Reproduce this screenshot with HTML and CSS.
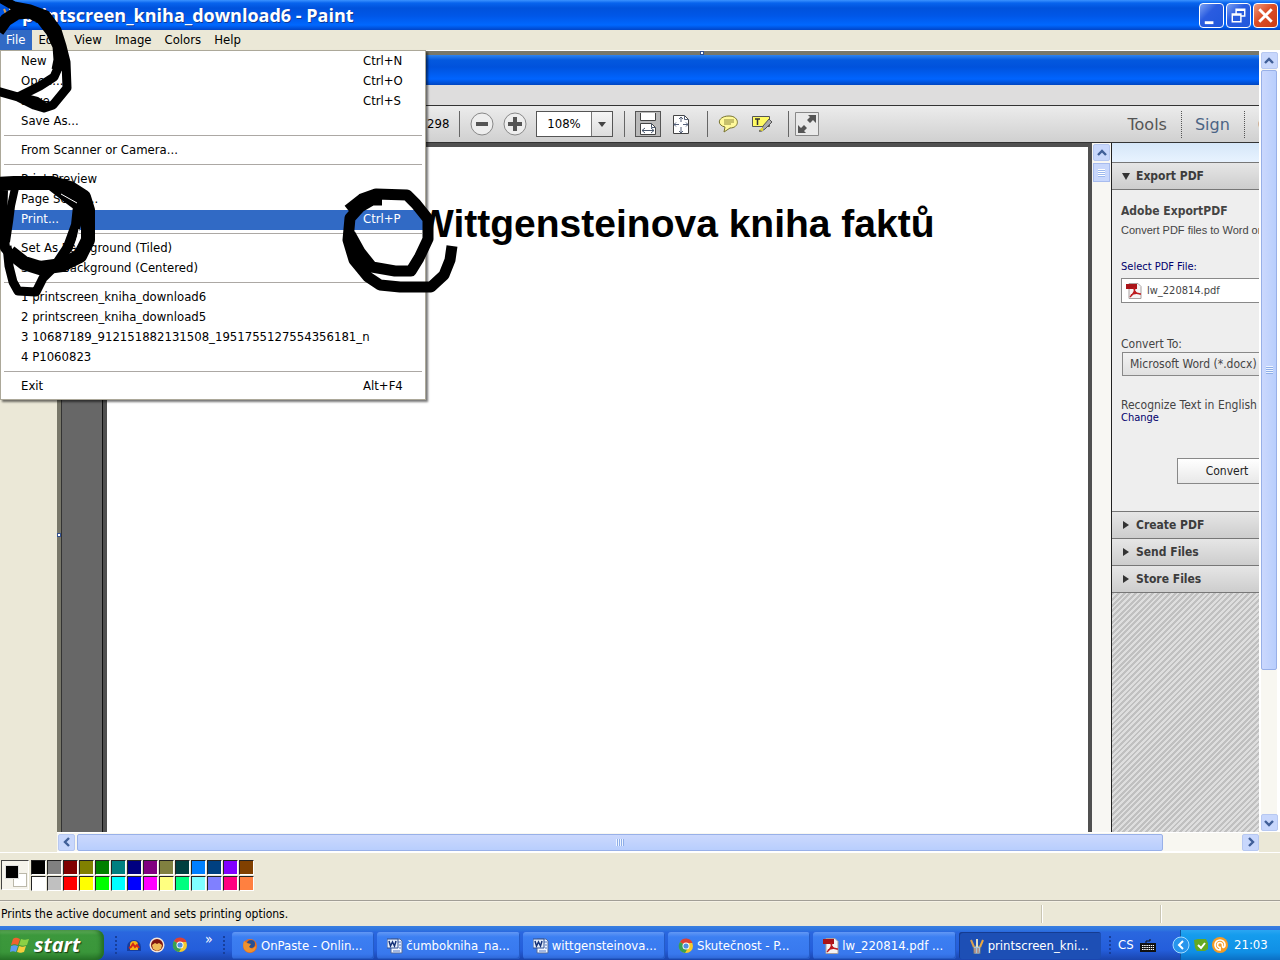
FILE: index.html
```html
<!DOCTYPE html>
<html lang="en">
<head>
<meta charset="utf-8">
<title>printscreen_kniha_download6 - Paint</title>
<link rel="stylesheet" href="styles.css">
</head>
<body>
<svg class="defs" aria-hidden="true">
  <defs>
    <symbol id="up" viewBox="0 0 10 10"><path d="M1 7l4-4 4 4" fill="none" stroke="#405f98" stroke-width="2.4"/></symbol>
    <symbol id="word" viewBox="0 0 16 16"><path d="M4 1h9l2 2v12H4z" fill="#eef4ff" stroke="#526a9d"/><path d="M11 4h3M12 7h2M12 10h2M6 13h7" stroke="#5479c4"/><path d="M0 1h11v9H0z" fill="#e5eefc" stroke="#315192"/><path d="M2 3l1.500 5L5.500 4l2 4L9 3" fill="none" stroke="#153278" stroke-width="1.500"/></symbol>
    <symbol id="chrome" viewBox="0 0 16 16"><circle cx="8" cy="8" r="7" fill="#f4ca2d"/><path d="M8 8L2 4a7 7 0 0 1 12.500 1H8z" fill="#dc4134"/><path d="M8 8l-6-4a7 7 0 0 0 5 11l3-5z" fill="#38a052"/><circle cx="8" cy="8" r="3.500" fill="#fff"/><circle cx="8" cy="8" r="2.600" fill="#4f8fdf"/></symbol>
    <symbol id="pdf" viewBox="0 0 16 16"><path d="M3 .5h9l3 3v12H3z" fill="#f5f3f3" stroke="#a9a0a0"/><path d="M0 1h11v5H0z" fill="#aa1419"/><path d="M8 4c2 4-1 7-4 10M8 5c0 4 3 6 7 6M5 12c3-2 6-2 9-1" fill="none" stroke="#bd191e" stroke-width="1.500"/></symbol>
    <symbol id="paint" viewBox="0 0 16 16"><path d="M4 8h8l-1 8H5z" fill="#a5c5d9" stroke="#536a87"/><path d="M5 9L2 2" stroke="#d7a052" stroke-width="2"/><path d="M8 9V1" stroke="#e4e0c5" stroke-width="2"/><path d="M11 9l3-7" stroke="#e8a842" stroke-width="2"/><path d="M6 10v5M9 10v5" stroke="#bd6345"/></symbol>
  </defs>
</svg>

<header class="titlebar">
  <svg class="app-icon"><use href="#paint"/></svg>
  <h1>printscreen_kniha_download6 - Paint</h1>
  <div class="window-buttons">
    <button aria-label="Minimize"><svg viewBox="0 0 24 24"><path d="M5 18h9v3H5z" fill="#fff"/></svg></button>
    <button aria-label="Restore"><svg viewBox="0 0 24 24"><path d="M9.500 10V5.500h9v7H15M9 6.500h10M5.500 10.500h9v8h-9zM5 11.500h10" fill="none" stroke="#fff" stroke-width="1.500"/></svg></button>
    <button class="close" aria-label="Close"><svg viewBox="0 0 24 24"><path d="M5.500 5.500l13 13M18.500 5.500l-13 13" stroke="#fff" stroke-width="3"/></svg></button>
  </div>
</header>

<nav class="menubar">
  <button class="open">File</button><button>Edit</button><button>View</button><button>Image</button><button>Colors</button><button>Help</button>
  <div class="menu">
    <button>New<kbd>Ctrl+N</kbd></button>
    <button>Open...<kbd>Ctrl+O</kbd></button>
    <button>Save<kbd>Ctrl+S</kbd></button>
    <button>Save As...</button>
    <hr>
    <button>From Scanner or Camera...</button>
    <hr>
    <button>Print Preview</button>
    <button>Page Setup...</button>
    <button class="selected">Print...<kbd>Ctrl+P</kbd></button>
    <hr>
    <button>Set As Background (Tiled)</button>
    <button>Set As Background (Centered)</button>
    <hr>
    <button>1 printscreen_kniha_download6</button>
    <button>2 printscreen_kniha_download5</button>
    <button>3 10687189_912151882131508_1951755127554356181_n</button>
    <button>4 P1060823</button>
    <hr>
    <button>Exit<kbd>Alt+F4</kbd></button>
  </div>
</nav>

<main class="workspace">
  <aside class="toolbox"></aside>
  <div class="view">
    <div class="canvas">
      <i class="handle top"></i><i class="handle left"></i>
      <div class="pdf-title"></div>
      <div class="pdf-menu"></div>
      <div class="pdf-toolbar">
        <span>298</span>
        <i class="rule"></i>
        <button class="round" aria-label="Zoom out"><svg viewBox="0 0 24 24"><circle cx="12" cy="12" r="11" fill="#eee" stroke="#888"/><path d="M6 10h12v4H6z" fill="#555"/></svg></button>
        <button class="round" aria-label="Zoom in"><svg viewBox="0 0 24 24"><circle cx="12" cy="12" r="11" fill="#eee" stroke="#888"/><path d="M5 10h5V5h4v5h5v4h-5v5h-4v-5H5z" fill="#555"/></svg></button>
        <div class="zoom"><input aria-label="Zoom" value="108%"><button aria-label="Zoom levels"><svg viewBox="0 0 8 5"><path d="M0 0h8L4 5z" fill="#444"/></svg></button></div>
        <i class="rule"></i>
        <button class="fit on" aria-label="Fit width"><svg viewBox="0 0 24 24"><path d="M4.500 1v7.500h15V1M4.500 22.500v-11h11l4 4v7z" fill="#fff" stroke="#444"/><path d="M15.500 11.500v4h4M6 18.500h12M9 16l-3 2.500L9 21M15 16l3 2.500-3 2.500" fill="none" stroke="#48566b"/></svg></button>
        <button class="fit" aria-label="Fit page"><svg viewBox="0 0 24 24"><path d="M4.500 3.500h11l4 4v14h-15z" fill="#fff" stroke="#444"/><path d="M15.500 3.500v4h4M12 5v5M12 15v6M5 12.500h5M14 12.500h5M10 7l2-2 2 2M10 19l2 2 2-2M7 10.500l-2 2 2 2M17 10.500l2 2-2 2" fill="none" stroke="#55617a"/></svg></button>
        <i class="rule"></i>
        <button class="note" aria-label="Comment"><svg viewBox="0 0 22 20"><path d="M11 2c11 0 11 12 1 12l-6 4 1-5C-2 11 0 2 11 2z" fill="#fff99b" stroke="#77732e"/><path d="M6 6h10M6 8h10M6 10h7" stroke="#8d873c"/></svg></button>
        <button class="note" aria-label="Highlight"><svg viewBox="0 0 22 20"><path d="M1.500 2.500h17v10h-17z" fill="#fffa63" stroke="#555"/><path d="M4 5h5M6.500 5v6" stroke="#333" stroke-width="1.500"/><path d="M8 17c3-1 3-2 4-5l6-7 3 3-7 7c-2 1-3 3-6 2z" fill="#aaa" stroke="#555"/><path d="M8 16l4-3v4z" fill="#e8dd2a"/></svg></button>
        <i class="rule"></i>
        <button class="expand" aria-label="Full screen"><svg viewBox="0 0 24 24"><path d="M.5.500h23v23H.5z" fill="#e9e9e9" stroke="#888"/><path d="M21 3v8l-3-3-3 3-3-3 3-3-2-2zM3 21v-8l3 3 3-3 3 3-3 3 2 2z" fill="#555"/></svg></button>
        <div class="tabs"><button>Tools</button><button class="sign">Sign</button><button>C</button></div>
      </div>
      <div class="pdf-body">
        <div class="thumbs"></div>
        <article class="page"><h2>Wittgensteinova kniha faktů</h2></article>
        <div class="inner-scroll"><button aria-label="Scroll up"><svg><use href="#up"/></svg></button><b></b></div>
        <section class="panel">
          <div class="panel-top"></div>
          <button class="head"><svg viewBox="0 0 8 8"><path d="M0 1h8L4 8z"/></svg>Export PDF</button>
          <div class="export">
            <h3>Adobe ExportPDF</h3>
            <p class="small">Convert PDF files to Word or</p>
            <a href="#" class="select-label">Select PDF File:</a>
            <div class="file"><svg><use href="#pdf"/></svg>lw_220814.pdf</div>
            <label for="format">Convert To:</label>
            <select id="format"><option>Microsoft Word (*.docx)</option></select>
            <p class="language">Recognize Text in English</p>
            <a href="#" class="change">Change</a>
            <button class="convert">Convert</button>
          </div>
          <button class="head"><svg viewBox="0 0 8 8"><path d="M1 0v8l6-4z"/></svg>Create PDF</button>
          <button class="head"><svg viewBox="0 0 8 8"><path d="M1 0v8l6-4z"/></svg>Send Files</button>
          <button class="head"><svg viewBox="0 0 8 8"><path d="M1 0v8l6-4z"/></svg>Store Files</button>
          <div class="hatch"></div>
        </section>
      </div>
    </div>
    <div class="vscroll"><button aria-label="Scroll up"><svg><use href="#up"/></svg></button><b></b><button class="down" aria-label="Scroll down"><svg><use href="#up"/></svg></button></div>
    <div class="hscroll"><button class="to-left" aria-label="Scroll left"><svg><use href="#up"/></svg></button><b></b><button class="to-right" aria-label="Scroll right"><svg><use href="#up"/></svg></button></div>
  </div>
</main>

<section class="palette">
  <div class="current"><i class="back"></i><i class="front"></i></div>
  <div class="swatches">
    <button class="c1"></button><button class="c2"></button><button class="c3"></button><button class="c4"></button><button class="c5"></button><button class="c6"></button><button class="c7"></button><button class="c8"></button><button class="c9"></button><button class="c10"></button><button class="c11"></button><button class="c12"></button><button class="c13"></button><button class="c14"></button>
    <button class="c15"></button><button class="c16"></button><button class="c17"></button><button class="c18"></button><button class="c19"></button><button class="c20"></button><button class="c21"></button><button class="c22"></button><button class="c23"></button><button class="c24"></button><button class="c25"></button><button class="c26"></button><button class="c27"></button><button class="c28"></button>
  </div>
</section>
<div class="status"><span>Prints the active document and sets printing options.</span><i></i><i></i></div>

<footer class="taskbar">
  <button class="start"><svg viewBox="0 0 20 20"><path d="M3 4c3-2 4-1 7 0L8 10c-3-1-4-1-7 0z" fill="#ee622f"/><path d="M11 4c3 1 4 1 8 0l-2 6c-3 1-5 1-8 0z" fill="#8bd145"/><path d="M1 11c3-1 4-1 7 0l-2 6c-2-1-4-1-6 0z" fill="#5b9cf3"/><path d="M9 11c3 1 4 1 7 0l-2 6c-3 1-4 1-7 0z" fill="#f7ce3d"/></svg>start</button>
  <i class="grip"></i>
  <div class="quick">
    <button aria-label="Audacity"><svg viewBox="0 0 16 16"><path d="M1 10a7 7 0 0 1 14 0v4H1z" fill="#163d9e"/><path d="M4 8a4 4 0 0 1 8 0v5H4z" fill="#f5b318"/><path d="M3 11l2-1 2-3 2 3 2-2 2 3" stroke="#d32718" fill="none" stroke-width="2"/></svg></button>
    <button aria-label="Irfan"><svg viewBox="0 0 16 16"><circle cx="8" cy="8" r="7.500" fill="#f5e6d9"/><circle cx="8" cy="8" r="6" fill="#80160f"/><path d="M3 8l3-2 2 1 2-1 3 2-1 4-4 2-4-2z" fill="#efbc5b"/></svg></button>
    <button aria-label="Chrome"><svg><use href="#chrome"/></svg></button>
    <span>»</span>
  </div>
  <i class="grip"></i>
  <div class="tasks">
    <button><svg viewBox="0 0 16 16"><circle cx="8" cy="8" r="7" fill="#e66b1e"/><circle cx="9" cy="6" r="4" fill="#284e91"/><path d="M2 3l3 2 4 1-2 3 3 2 4-3c0 5-4 7-8 6-4-1-6-6-4-11z" fill="#ef922e"/></svg>OnPaste - Onlin...</button>
    <button><svg><use href="#word"/></svg>čumbokniha_na...</button>
    <button><svg><use href="#word"/></svg>wittgensteinova...</button>
    <button><svg><use href="#chrome"/></svg>Skutečnost - P...</button>
    <button><svg><use href="#pdf"/></svg>lw_220814.pdf ...</button>
    <button class="active"><svg><use href="#paint"/></svg>printscreen_kni...</button>
  </div>
  <div class="lang"><i class="grip"></i><span>CS</span><svg viewBox="0 0 16 16"><path d="M0 6h16v9H0z" fill="#111"/><path d="M2 8.500h12M2 10.500h12M2 12.500h12" stroke="#fff" stroke-dasharray="1.500 .7"/><path d="M6 6V4h4V2" stroke="#111" fill="none"/></svg></div>
  <div class="tray">
    <button class="hide" aria-label="Hide icons"><svg viewBox="0 0 18 18"><circle cx="9" cy="9" r="8" fill="#2695ed" stroke="#a2daff"/><path d="M11 5L7 9l4 4" fill="none" stroke="#fff" stroke-width="2"/></svg></button>
    <svg viewBox="0 0 16 16"><path d="M1 3l4-1h8l2 4v6l-3 2H4l-2-3z" fill="#64a922"/><path d="M5 8l3 3 4-5" stroke="#fff" stroke-width="2" fill="none"/></svg>
    <svg viewBox="0 0 16 16"><circle cx="8" cy="8" r="8" fill="#f59b23"/><path d="M10.500 8a2.500 2.500 0 1 0-2.500 2.500V13a5 5 0 1 1 5-5c0 3-2.500 3-2.500 1z" fill="none" stroke="#fff" stroke-width="1.700"/></svg>
    <time>21:03</time>
  </div>
</footer>

<svg class="scribble" viewBox="0 0 470 310" aria-hidden="true">
  <g fill="none" stroke="#000" stroke-linejoin="round">
    <path stroke-width="13" d="M-2 31L6 20 17 13 30 12 42 18 52 31 59 46 60 60 58 70"/>
    <path stroke-width="9" d="M-2-3L14 6 30 9 46 15 57 30 62 46 66 62 67 88 53 105 44 108 34 105 18 97-3 91"/>
    <path stroke-width="9" d="M58 68L54 77 40 86 18 97M20 97L36 101 46 108"/>
    <path stroke-width="14" d="M-2 184L14 183 52 183 70 188 84 197 88 210 88 240 80 256 62 265 40 268 24 263 10 252"/>
    <path stroke-width="10" d="M3 190L2 220 5 248 14 258M52 186L66 197 78 206 76 225 68 247 58 262"/>
    <path stroke-width="8" d="M15 188L11 206 9 222 6 242"/>
    <path stroke-width="9" d="M7 246L9 266 13 282 18 291 36 292 43 278 54 267"/>
    <path stroke-width="11" d="M382 200H372L360 207 350 218 348 240 354 260 368 277 380 285 400 287H431L444 275 450 260 452 246"/>
    <path stroke-width="11" d="M348 210L362 199 376 194 407 195 416 204 428 219 428 239 419 258 411 271H395L372 267 360 252 350 234"/>
  </g>
  <g fill="none" stroke="#fff">
    <path d="M61 194L77 203M79 229L75 248"/>
  </g>
</svg>
</body>
</html>
```
FILE: styles.css
```css
* { box-sizing: border-box; }
body {
  margin: 0;
  height: 100vh;
  display: flex;
  flex-direction: column;
  overflow: hidden;
  position: relative;
  background: #ebe8d7;
  color: #000;
  font: 13px/20px "DejaVu Sans Condensed", "Noto Sans", sans-serif;
}
button { font: inherit; color: inherit; padding: 0; border: 0; background: none; white-space: nowrap; }
h1, h2, h3, p { margin: 0; }
svg { display: block; flex: none; }
.defs { position: absolute; width: 0; height: 0; }

.titlebar {
  flex: none;
  height: 30px;
  display: flex;
  align-items: center;
  gap: 4px;
  padding: 0 2px;
  color: #fff;
  background: linear-gradient(#3b92ff, #0864ee 3px, #0052dc 8px, #0057e8 16px, #0068ff 25px, #0045c8);
}
.app-icon { width: 16px; height: 16px; }
.titlebar h1 { font: bold 18px/24px "Open Sans", sans-serif; text-shadow: 1px 1px #123a93; white-space: nowrap; }
.window-buttons { margin-left: auto; display: flex; gap: 2px; }
.window-buttons button { width: 25px; height: 25px; border: 1px solid #fff; border-radius: 4px; background: linear-gradient(135deg, #7da2f4, #2a5ce0 40%, #2058dc); }
.window-buttons .close { background: linear-gradient(135deg, #ee9a7e, #dc4d26 45%, #c93c16); }

.menubar { flex: none; height: 20px; display: flex; position: relative; }
.menubar > button { padding: 0 7px 0 6px; }
.menubar > .open { background: #316ac5; color: #fff; }
.menu {
  position: absolute;
  z-index: 2;
  top: 20px;
  left: 0;
  width: 426px;
  padding: 1px 2px 2px;
  background: #fff;
  border: 1px solid #aca899;
  box-shadow: 2px 2px 2px #0008;
}
.menu button { display: flex; width: 100%; height: 20px; padding: 0 0 2px 18px; line-height: 18px; text-align: left; }
.menu .selected { background: #316ac5; color: #fff; }
.menu kbd { font: inherit; margin-left: auto; width: 60px; }
.menu hr { margin: 3px 1px 5px; border: 0; height: 1px; background: #aca8a4; }

.workspace { flex: 1; min-height: 0; display: flex; }
.toolbox { width: 57px; flex: none; }
.view { flex: 1; min-width: 0; display: grid; grid-template: minmax(0, 1fr) 20px / minmax(0, 1fr) 21px; border-top: 1px solid #fff; }
.canvas { position: relative; display: flex; flex-direction: column; border: solid #787769; border-width: 4px 0 0 4px; }
.handle { position: absolute; width: 2px; height: 2px; background: #fff; outline: 1px solid #33508e; }
.handle.top { left: 640px; top: -3px; }
.handle.left { left: -3px; top: 479px; }
.pdf-title { flex: none; height: 30px; background: linear-gradient(#2e83ee, #0459df 5px, #0052dc 12px, #0064ff 24px, #0045c0); }
.pdf-menu { flex: none; height: 21px; background: #dedddd; border-bottom: 1px solid #333; }
.pdf-toolbar {
  flex: none;
  height: 37px;
  display: flex;
  align-items: center;
  padding-left: 366px;
  overflow: hidden;
  background: linear-gradient(#ececec, #d0d0d0);
  border-bottom: 1px solid #333;
}
.pdf-toolbar span { width: 22px; }
.rule { flex: none; width: 1px; height: 26px; margin: 0 10px; background: #666; }
.round { margin-right: 9px; }
.round svg { width: 24px; height: 24px; }
.zoom { flex: none; width: 77px; height: 26px; display: flex; border: 1px solid #555; background: #fff; margin-right: 1px; }
.zoom input { width: 54px; border: 0; padding: 0; text-align: center; background: none; font: inherit; }
.zoom button { flex: 1; display: grid; place-items: center; border-left: 1px solid #777; background: linear-gradient(#f5f5f5, #ddd); }
.zoom svg { width: 8px; height: 5px; }
.fit svg { width: 24px; height: 24px; }
.fit { margin-right: 8px; }
.fit + .rule { margin-left: 6px; }
.fit.on { border: 1px solid #555; background: #b9b9b9; }
.note { margin-right: 11px; }
.note svg { width: 22px; height: 20px; }
.note + .rule { margin-left: 4px; margin-right: 6px; }
.expand svg { width: 24px; height: 24px; }
.tabs { display: flex; margin: 0 -10px 0 auto; font: 16px/27px "DejaVu Sans", sans-serif; color: #555; }
.tabs button { padding: 0 14px 0 13px; border-right: 1px dotted #555; }
.tabs .sign, .tabs button:last-child { color: #4b6485; }
.tabs button:last-child { padding-right: 0; border: 0; }
.pdf-body { flex: 1; min-height: 0; display: flex; }
.thumbs { flex: none; width: 42px; background: #676767; border-left: 1px solid #333; border-right: 1px solid #111; }
.page { flex: 1; min-width: 0; background: #fff; border: solid #505050; border-width: 4px 4px 0; overflow: hidden; }
.page h2 { padding: 55px 0 0 310px; font: bold 39px/44px "Liberation Sans", sans-serif; white-space: nowrap; }
.inner-scroll { flex: none; width: 19px; padding: 1px; background: #f8f7f3; }
.inner-scroll button, .vscroll button, .hscroll button { flex: none; display: grid; place-items: center; width: 17px; height: 17px; border: 1px solid #b7c8f1; border-radius: 2px; background: #c8d7fc; }
.inner-scroll svg, .vscroll svg, .hscroll svg { width: 10px; height: 10px; }
.inner-scroll b { display: block; width: 17px; height: 19px; margin-top: 2px; border: 1px solid #a8bcee; background: repeating-linear-gradient(#fff 0 1px, #9db9ee 1px 2px) center / 7px 8px no-repeat #c8d7fc; }
.panel { flex: none; width: 148px; display: flex; flex-direction: column; overflow: hidden; border-left: 1px solid #222; background: #eee; color: #444; }
.panel-top { flex: none; height: 20px; background: linear-gradient(#d5e6f8, #e8f3ff); border-bottom: 1px solid #777; }
.head { flex: none; height: 27px; display: flex; align-items: center; gap: 6px; padding-left: 10px; font-weight: bold; color: #3c3c3c; text-align: left; background: linear-gradient(#e6e6e6, #cdcdcd); border-bottom: 1px solid #777; }
.head svg { width: 8px; height: 8px; fill: #333; }
.head, .export h3 { font-size: 12px; }
.export { flex: none; height: 322px; display: flex; flex-direction: column; padding-left: 9px; width: 240px; border-bottom: 1px solid #777; font-size: 12px; line-height: 16px; }
.export h3 { margin-top: 12px; line-height: 18px; }
.export .small { margin-top: 2px; font: 11px/16px "Liberation Sans", sans-serif; }
.export a { color: #00006c; text-decoration: none; font-size: 11px; }
.export .select-label { margin-top: 21px; }
.file { width: 210px; height: 25px; margin-top: 3px; display: flex; align-items: center; gap: 5px; padding: 0 4px; font-size: 11px; background: #fff; border: 1px solid #888; }
.file svg { width: 16px; height: 16px; }
.export label { margin-top: 33px; }
.export select { appearance: none; width: 210px; height: 24px; margin-left: 1px; padding: 0 7px; border: 1px solid #888; border-radius: 0; background: linear-gradient(#f3f3f3, #e0e0e0); font: inherit; color: #444; }
.language { margin-top: 21px; }
.export .change { line-height: 12px; margin-top: -1px; }
.convert { flex: none; width: 100px; height: 26px; margin: 34px 0 0 56px; border: 1px solid #888; background: linear-gradient(#fff, #e8e8e8); color: #222; }
.hatch { flex: 1; background: repeating-linear-gradient(135deg, #c0c0c0 0 2px, #dedede 2px 4px); }

.vscroll, .hscroll { display: flex; align-items: center; background: #f8f7f1; border: solid #fff; border-width: 1px 2px; }
.vscroll { flex-direction: column; border-right: 3px solid #fff; }
.hscroll { padding-left: 1px; border-width: 1px 0; }
.vscroll b { width: 16px; height: 600px; margin: 1px 0 auto; border: 1px solid #98b0e8; border-radius: 2px; background: repeating-linear-gradient(#eef4ff 0 1px, #8eaee8 1px 2px) center / 7px 8px no-repeat, linear-gradient(90deg, #cbd8fd, #b8cefd); }
.hscroll b { flex: 0 1 1086px; height: 17px; margin: 0 auto 0 2px; border: 1px solid #98b0e8; border-radius: 2px; background: repeating-linear-gradient(90deg, #eef4ff 0 1px, #8eaee8 1px 2px) center / 8px 7px no-repeat, linear-gradient(#cbd8fd, #b8cefd); }
.down svg { transform: rotate(180deg); }
.to-left svg { transform: rotate(-90deg); }
.to-right svg { transform: rotate(90deg); }

.palette { flex: none; height: 50px; display: flex; gap: 2px; padding: 7px 0 0 1px; border-top: 1px solid #fff; border-bottom: 2px groove #f5f1e5; }
.current { position: relative; width: 28px; height: 30px; border: 1px solid #444; border-right-color: #fff; border-bottom-color: #fff; background: #f5f3eb; }
.current i { position: absolute; width: 14px; height: 14px; border: 1px solid #bbb8aa; }
.current .front { left: 3px; top: 4px; background: #000; border: 1px solid #ddd; }
.current .back { left: 11px; top: 12px; background: #fff; }
.swatches { display: grid; grid-template-columns: repeat(14, 15px); grid-auto-rows: 15px; gap: 1px; }
.swatches button { border: 1px solid #222; border-right-color: #fff; border-bottom-color: #fff; }
.c1 { background: #000; } .c2 { background: #808080; } .c3 { background: #800000; } .c4 { background: #808000; }
.c5 { background: #008000; } .c6 { background: #008080; } .c7 { background: #000080; } .c8 { background: #800080; }
.c9 { background: #808040; } .c10 { background: #004040; } .c11 { background: #0080ff; } .c12 { background: #004080; }
.c13 { background: #8000ff; } .c14 { background: #804000; } .c15 { background: #fff; } .c16 { background: #c0c0c0; }
.c17 { background: #f00; } .c18 { background: #ff0; } .c19 { background: #0f0; } .c20 { background: #0ff; }
.c21 { background: #00f; } .c22 { background: #f0f; } .c23 { background: #ffff80; } .c24 { background: #00ff80; }
.c25 { background: #80ffff; } .c26 { background: #8080ff; } .c27 { background: #ff0080; } .c28 { background: #ff8040; }

.status { flex: none; height: 24px; display: flex; align-items: center; padding: 2px 1px; font-size: 12px; }
.status span { flex: 1; }
.status i { width: 119px; height: 18px; border-left: 1px solid #c9c5b2; box-shadow: inset 1px 0 #fff; }

.taskbar { flex: none; height: 34px; display: flex; padding-top: 4px; color: #fff; background: linear-gradient(#397fe0, #2f75e0 4px, #2a67df 6px, #245edb 24px, #1a45ad); }
.start { flex: none; width: 104px; display: flex; align-items: center; gap: 4px; padding-left: 10px; font: italic bold 20px/28px "Open Sans", sans-serif; text-shadow: 1px 1px 1px #153b12; border-radius: 0 8px 8px 0; background: linear-gradient(#6cb763, #3c983c 5px, #3a963a 22px, #287628); box-shadow: inset -3px 0 4px #236b25; }
.start svg { width: 20px; height: 20px; }
.grip { flex: none; width: 4px; height: 20px; margin: 5px 0 0 10px; background: radial-gradient(#173f9c 1px, transparent 1px) 0 0 / 4px 4px; }
.quick { flex: none; display: flex; align-items: center; gap: 7px; width: 98px; margin-left: 8px; }
.quick svg, .tasks svg, .lang svg, .tray svg { width: 16px; height: 16px; }
.quick span { margin: 0 0 12px 10px; font-size: 14px; }
.quick + .grip { margin-left: -2px; }
.tasks { flex: 1; min-width: 0; display: flex; gap: 3px; margin: 2px 0 1px 6px; }
.tasks button { flex: 1; min-width: 0; display: flex; align-items: center; gap: 3px; padding-left: 10px; overflow: hidden; border-radius: 3px; background: linear-gradient(#6298f5, #3c7ff2 5px, #3878ee 22px, #2e65d5); box-shadow: inset -1px -1px #245bc6; }
.tasks .active { background: #1d4fb5; box-shadow: inset 1px 1px #153c91; }
.lang { flex: none; display: flex; align-items: center; gap: 6px; width: 79px; padding-left: 7px; }
.lang .grip { margin: 0; }
.tray { flex: none; display: flex; align-items: center; gap: 3px; width: 100px; color: #fff; background: linear-gradient(#2aa6f2, #159ced 5px, #108fe5 22px, #0b6fc4); border-left: 1px solid #10549e; }
.tray .hide { margin-left: -9px; }
.tray .hide svg { width: 18px; height: 18px; }
.tray time { margin-left: 3px; }
.scribble { position: absolute; z-index: 3; left: 0; top: 0; width: 470px; height: 310px; pointer-events: none; }
```
